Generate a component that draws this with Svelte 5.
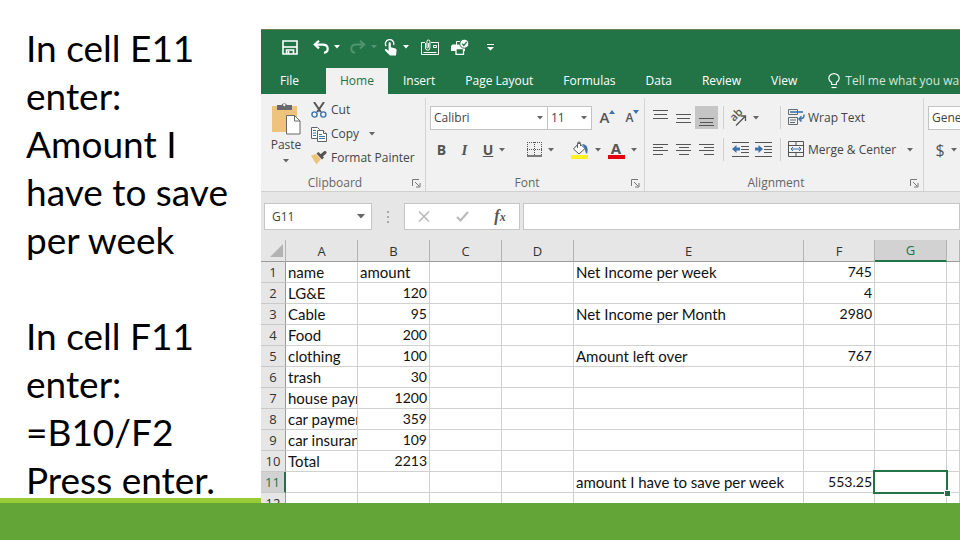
<script lang="ts">
	const notes = [
		['In cell E11', 'enter:', 'Amount I', 'have to save', 'per week'],
		['In cell F11', 'enter:', '=B10/F2', 'Press enter.']
	];

	const tabs = ['Insert', 'Page Layout', 'Formulas', 'Data', 'Review', 'View'];

	const columns = ['A', 'B', 'C', 'D', 'E', 'F', 'G', ''];

	type Row = Record<string, string | number>;

	const rows: Row[] = [
		{ A: 'name', B: 'amount', E: 'Net Income per week', F: 745 },
		{ A: 'LG&E', B: 120, F: 4 },
		{ A: 'Cable', B: 95, E: 'Net Income per Month', F: 2980 },
		{ A: 'Food', B: 200 },
		{ A: 'clothing', B: 100, E: 'Amount left over', F: 767 },
		{ A: 'trash', B: 30 },
		{ A: 'house payment', B: 1200 },
		{ A: 'car payment', B: 359 },
		{ A: 'car insurance', B: 109 },
		{ A: 'Total', B: 2213 },
		{ E: 'amount I have to save per week', F: 553.25 },
		{}
	];

	let formula = $state('');
	let selected = $state({ col: 'G', row: 11 });
</script>

{#snippet caret()}
	<svg class="caret" width="6" height="4" viewBox="0 0 6 4" aria-hidden="true">
		<path d="M0 0h6L3 3.5z" fill="currentColor" />
	</svg>
{/snippet}

{#snippet lines(rowsOfLines: number[][])}
	<svg width="16" height="16" viewBox="0 0 16 16" aria-hidden="true">
		{#each rowsOfLines as [x, y, w]}
			<rect {x} {y} width={w} height="1" fill="#555" />
		{/each}
	</svg>
{/snippet}

{#snippet launcher(label: string)}
	<button class="launcher" aria-label="{label} settings">
		<svg width="9" height="9" viewBox="0 0 9 9" fill="none" stroke="#777">
			<path d="M.5 7V.5H7M3 3l4 4M8 4v4H4" />
		</svg>
	</button>
{/snippet}

<main class="slide">
	<div class="slide__content">
		<section class="notes">
			{#each notes as block}
				<p>
					{#each block as line}
						<span>{line}</span>
					{/each}
				</p>
			{/each}
		</section>

		<section class="excel" aria-label="Spreadsheet">
			<div class="quick">
				<button class="quick__save" aria-label="Save">
					<svg width="16" height="15" viewBox="0 0 16 15" fill="none" stroke="#fff" stroke-width="1.6">
						<path d="M1 1h14v13H1z" />
						<path d="M1 7h14" />
						<path d="M4.5 14v-4h7v4" />
						<path d="M6.5 11v3" />
					</svg>
				</button>
				<button class="quick__split" aria-label="Undo">
					<svg width="16" height="14" viewBox="0 0 16 14" fill="none" stroke="#fff" stroke-width="2.2">
						<path d="M6 .8L1.8 4.6 6 8.4" />
						<path d="M2 4.6h7.5c3.4 0 5.2 1.9 5.2 4.2 0 2.2-1.4 3.7-3.7 4" />
					</svg>
					{@render caret()}
				</button>
				<button class="quick__split quick__split--off" aria-label="Redo" disabled>
					<svg width="16" height="14" viewBox="0 0 16 14" fill="none" stroke="#4f9570" stroke-width="2">
						<path d="M10 .8l4.2 3.8L10 8.4" />
						<path d="M14 4.6H6.5c-3.4 0-5.2 1.9-5.2 4.2 0 2.2 1.4 3.7 3.7 4" />
					</svg>
					{@render caret()}
				</button>
				<button class="quick__split" aria-label="Touch mode">
					<svg width="14" height="17" viewBox="0 0 14 17" aria-hidden="true">
						<path d="M2.2 7.2A4.2 4.2 0 1 1 9.6 6" fill="none" stroke="#fff" stroke-width="1.3" />
						<path
							d="M4.6 4.3c0-1.5 2.2-1.5 2.2 0v4l4.5 1.2c1 .3 1.4 1 1.3 1.9L12 16.5H6L1 11.5c-.6-1 .6-1.9 1.6-1.2l2 1.4z"
							fill="#fff"
						/>
					</svg>
					{@render caret()}
				</button>
				<button class="quick__wide" aria-label="Attach">
					<svg width="18" height="16" viewBox="0 0 18 16" fill="none" stroke="#fff">
						<path d="M4 3.5H.5v12h17v-12H10M2.5 13.5h13M12.5 6.5h3v2h-3z" />
						<path d="M4.5 4v5a2.2 2.2 0 0 0 4.4 0V2.5a1.5 1.5 0 0 0-3 0v6a.8.8 0 0 0 1.5 0V4" />
					</svg>
				</button>
				<button class="quick__wide" aria-label="Print preview">
					<svg width="18" height="16" viewBox="0 0 18 16" aria-hidden="true">
						<path d="M5.5 6V2.5H10" fill="none" stroke="#fff" />
						<path d="M1.5 5.5H14V12H0V7z" fill="#fff" />
						<path d="M5 9.5h7.5v6H5z" fill="#227447" stroke="#fff" stroke-width="1.3" />
						<circle cx="13.3" cy="4.7" r="4.5" fill="#fff" stroke="#227447" />
						<path d="M11.2 4.6l1.6 1.8 2.9-3.5" fill="none" stroke="#227447" stroke-width="1.3" />
					</svg>
				</button>
				<button class="quick__more" aria-label="Customize toolbar">
					<svg width="7" height="7" viewBox="0 0 7 7" fill="#fff">
						<path d="M0 0h7v1H0zM0 3h7L3.5 6.5z" />
					</svg>
				</button>
			</div>

			<nav class="tabs">
				<button class="tabs__file">File</button>
				<button class="tabs__item tabs__item--active">Home</button>
				{#each tabs as tab}
					<button class="tabs__item">{tab}</button>
				{/each}
				<button class="tabs__tell">
					<svg width="12" height="16" viewBox="0 0 12 16" fill="none" stroke="#fff" stroke-width="1.2">
						<path d="M3.6 11.5V9.6C2 8.5.8 7.2.8 5.3a5.2 4.7 0 0 1 10.4 0c0 1.9-1.2 3.2-2.8 4.3v1.9z" />
						<path d="M3.5 14.5h5" />
					</svg>
					Tell me what you want to do
				</button>
			</nav>

			<div class="ribbon">
				<div class="group group--clipboard">
					<div class="clipboard">
						<button class="paste">
							<svg width="30" height="33" viewBox="0 0 30 33" aria-hidden="true">
								<path d="M1 4h25v26H1z" fill="#eec47d" />
								<path d="M6 8V3h4.5a3 3 0 0 1 5.5 0H21v5z" fill="#68696b" />
								<circle cx="13.3" cy="3" r="1.2" fill="#f0f0f0" />
								<path d="M15.5 13.5h8l5.5 5.5v13H15.5z" fill="#fff" stroke="#68696b" />
								<path d="M23.5 13.5V19H29" fill="none" stroke="#68696b" />
							</svg>
							Paste
							{@render caret()}
						</button>
						<div class="clipboard__list">
							<button>
								<svg width="16" height="16" viewBox="0 0 16 16" fill="none">
									<path d="M3 0l6.8 10M13 0L6.2 10" stroke="#555" stroke-width="2" />
									<circle cx="3.5" cy="12.5" r="2.6" stroke="#3e72ab" stroke-width="1.4" />
									<circle cx="12.3" cy="12.5" r="2.6" stroke="#3e72ab" stroke-width="1.4" />
								</svg>
								Cut
							</button>
							<button>
								<svg width="16" height="16" viewBox="0 0 16 16" fill="#fff" stroke="#5f6368">
									<path d="M.5 1.5h6l2 2v9h-8z" />
									<path d="M2 4.5h3M2 7h3M2 9.5h3" stroke="#3e72ab" />
									<path d="M6.5 4.5h6l3 3v8h-9z" />
									<path d="M12.5 4.5v3h3" />
									<path d="M8 8.5h3M8 10.5h6M8 12.5h6" stroke="#3e72ab" />
								</svg>
								Copy
								{@render caret()}
							</button>
							<button>
								<svg width="16" height="14" viewBox="0 0 16 14" aria-hidden="true">
									<path d="M0 4.5l5-1.500 5 5-4.500 5.500L2.500 9z" fill="#eec47d" />
									<path d="M5.500 2.500L7.500 1l5.500 5.500-2 2z" fill="#555" />
									<path d="M10.500 4.500L14 1.500" stroke="#555" stroke-width="3" stroke-linecap="round" />
								</svg>
								Format Painter
							</button>
						</div>
					</div>
					<div class="group__label">Clipboard {@render launcher('Clipboard')}</div>
				</div>

				<div class="group group--font">
					<div class="tools">
						<label class="picker picker--family">
							<select aria-label="Font"><option>Calibri</option></select>
							{@render caret()}
						</label>
						<label class="picker picker--size">
							<select aria-label="Font size"><option>11</option></select>
							{@render caret()}
						</label>
						<button class="tool tool--grow" aria-label="Increase font size">
							A
							<svg width="6" height="4" viewBox="0 0 6 4"><path d="M0 4h6L3 0z" fill="#3e72ab" /></svg>
						</button>
						<button class="tool tool--shrink" aria-label="Decrease font size">
							A
							<svg width="6" height="4" viewBox="0 0 6 4"><path d="M0 0h6L3 4z" fill="#3e72ab" /></svg>
						</button>
					</div>
					<div class="tools">
						<button class="tool tool--bold">B</button>
						<button class="tool tool--italic">I</button>
						<button class="tool tool--split tool--underline"><span>U</span>{@render caret()}</button>
						<i class="rule"></i>
						<button class="tool tool--split" aria-label="Borders">
							<svg width="15" height="15" viewBox="0 0 15 15" fill="none" stroke="#555">
								<path d="M.5 0v13M7.5 0v13M14.5 0v13M0 .5h15M0 7.5h15" stroke-dasharray="1 1" />
								<path d="M0 14h15" stroke-width="1.5" />
							</svg>
							{@render caret()}
						</button>
						<i class="rule"></i>
						<button class="tool tool--split" aria-label="Fill color">
							<svg width="18" height="18" viewBox="0 0 18 18" aria-hidden="true">
								<path d="M0 14h17v4H0z" fill="#fff21f" />
								<path d="M8 2l6 5.5-6 5.5-5.5-5z" fill="#fff" stroke="#555" />
								<path d="M6.5 7V2.5a1.5 1.5 0 0 1 3 0V5" fill="none" stroke="#555" />
								<path d="M11 3c4.5 0 7 4 5 10-1.500-1-2-3-2-5.500z" fill="#3e72ab" />
							</svg>
							{@render caret()}
						</button>
						<button class="tool tool--split tool--color" aria-label="Font color">
							<span>A</span>
							{@render caret()}
						</button>
					</div>
					<div class="group__label">Font {@render launcher('Font')}</div>
				</div>

				<div class="group group--alignment">
					<div class="tools">
						<button class="tool" aria-label="Top align">
							{@render lines([[0, 0, 15], [1, 4, 13], [0, 8, 15]])}
						</button>
						<button class="tool" aria-label="Middle align">
							{@render lines([[0, 4, 15], [1, 8, 13], [0, 12, 15]])}
						</button>
						<button class="tool tool--on" aria-label="Bottom align">
							{@render lines([[0, 8, 15], [1, 12, 13], [0, 15, 15]])}
						</button>
						<i class="rule"></i>
						<button class="tool tool--split tool--orient" aria-label="Orientation">
							<svg width="18" height="18" viewBox="0 0 18 18">
								<text x="5" y="13" transform="rotate(-45 5 13)">ab</text>
								<path d="M7 16.5L16 7.5M11.5 7H16.5V12" fill="none" stroke="#555" stroke-width="1.3" />
							</svg>
							{@render caret()}
						</button>
						<i class="rule"></i>
						<button class="tool tool--text">
							<svg width="17" height="17" viewBox="0 0 17 17" fill="none" stroke="#626b73">
								<path d="M.5.5h9v5h-9zM.5 8.5h9v7h-9zM2 11h6M2 13.5h5" />
								<path d="M2 3h13" stroke="#3e72ab" stroke-width="1.6" />
								<path d="M16 5.5c.3 3-1 4.5-5 4.5M13.5 7.3L11 10l2.5 2.5" stroke="#3e72ab" stroke-width="1.5" />
							</svg>
							Wrap Text
						</button>
					</div>
					<div class="tools">
						<button class="tool" aria-label="Align left">
							{@render lines([[0, 2, 15], [0, 5, 10], [0, 8, 15], [0, 12, 10]])}
						</button>
						<button class="tool" aria-label="Center">
							{@render lines([[0, 2, 15], [3, 5, 10], [0, 8, 15], [3, 12, 10]])}
						</button>
						<button class="tool" aria-label="Align right">
							{@render lines([[0, 2, 15], [5, 5, 10], [0, 8, 15], [5, 12, 10]])}
						</button>
						<i class="rule"></i>
						<button class="tool" aria-label="Decrease indent">
							<svg width="17" height="15" viewBox="0 0 17 15" aria-hidden="true">
								<path d="M0 .5h17M9 4.5h8M9 7.5h8M9 10.5h8M0 14.5h17" stroke="#555" />
								<path d="M0 7l4.5-4v2.5H8v3H4.5V11z" fill="#3e72ab" />
							</svg>
						</button>
						<button class="tool" aria-label="Increase indent">
							<svg width="17" height="15" viewBox="0 0 17 15" aria-hidden="true">
								<path d="M0 .5h17M9 4.5h8M9 7.5h8M9 10.5h8M0 14.5h17" stroke="#555" />
								<path d="M8 7L3.5 3v2.5H0v3h3.5V11z" fill="#3e72ab" />
							</svg>
						</button>
						<i class="rule"></i>
						<button class="tool tool--text">
							<svg width="17" height="17" viewBox="0 0 17 17" fill="none" stroke="#555">
								<path d="M.5.5h15v15H.5zM.5 4.5h15M.5 11.5h15M8 .5v4M8 11.5v4" />
								<path d="M3 8h10M5 6L3 8l2 2M11 6l2 2-2 2" stroke="#3e72ab" />
							</svg>
							Merge &amp; Center
							{@render caret()}
						</button>
					</div>
					<div class="group__label">Alignment {@render launcher('Alignment')}</div>
				</div>

				<div class="group group--number">
					<div class="tools">
						<label class="picker picker--format">
							<select aria-label="Number format"><option>General</option></select>
						</label>
					</div>
					<div class="tools">
						<button class="tool tool--split tool--money"><span>$</span>{@render caret()}</button>
					</div>
				</div>
			</div>

			<div class="formula">
				<label class="formula__name">
					<input aria-label="Name box" value="{selected.col}{selected.row}" />
					<svg width="8" height="5" viewBox="0 0 8 5"><path d="M0 0h8L4 4.5z" fill="#666" /></svg>
				</label>
				<svg class="formula__dots" width="2" height="12" viewBox="0 0 2 12" fill="#aaa" aria-hidden="true">
					<path d="M0 0h2v2H0zM0 5h2v2H0zM0 10h2v2H0z" />
				</svg>
				<div class="formula__actions">
					<button aria-label="Cancel">
						<svg width="12" height="11" viewBox="0 0 12 11" stroke="#bbb" stroke-width="1.6">
							<path d="M1 .5l10 10M11 .5l-10 10" />
						</svg>
					</button>
					<button aria-label="Enter">
						<svg width="13" height="11" viewBox="0 0 13 11" fill="none" stroke="#bbb" stroke-width="2.2">
							<path d="M1 6l3.5 3.5L12 1" />
						</svg>
					</button>
					<button class="formula__fx" aria-label="Insert function">f<small>x</small></button>
				</div>
				<input class="formula__input" aria-label="Formula bar" bind:value={formula} />
			</div>

			<table class="sheet">
				<colgroup>
					<col class="sheet__rows" />
					<col class="sheet__col" />
					<col class="sheet__col" />
					<col class="sheet__col" />
					<col class="sheet__col" />
					<col class="sheet__wide" />
					<col class="sheet__narrow" />
					<col class="sheet__col" />
					<col />
				</colgroup>
				<thead>
					<tr>
						<th class="sheet__corner" aria-label="Select all">
							<svg width="13" height="13" viewBox="0 0 13 13"><path d="M13 0v13H0z" fill="#b3b3b3" /></svg>
						</th>
						{#each columns as col}
							<th scope="col" class:selected={col === selected.col}>{col}</th>
						{/each}
					</tr>
				</thead>
				<tbody>
					{#each rows as row, i}
						<tr>
							<th scope="row" class:selected={i + 1 === selected.row}><div>{i + 1}</div></th>
							{#each columns as col}
								<td
									class:number={typeof row[col] === 'number'}
									class:active={col === selected.col && i + 1 === selected.row}
								>
									<div>{row[col] ?? ''}</div>
								</td>
							{/each}
						</tr>
					{/each}
				</tbody>
			</table>
		</section>
	</div>
	<div class="slide__band"></div>
</main>

<style>
	:global(body) {
		background: #fff;
	}

	button,
	input,
	select {
		margin: 0;
		padding: 0;
		border: 0;
		border-radius: 0;
		background: none;
		color: inherit;
		font: inherit;
	}

	button {
		display: flex;
		flex: none;
		align-items: center;
		white-space: nowrap;
	}

	svg {
		display: block;
		flex: none;
	}

	.slide {
		display: flex;
		flex-direction: column;
		min-height: 100vh;
		overflow: hidden;
	}

	.slide__content {
		display: grid;
		grid-template-columns: 261px minmax(0, 1fr);
	}

	.slide__band {
		flex: 1;
		min-height: 37px;
		background: #63a537;
	}

	.notes {
		display: flex;
		flex-direction: column;
		gap: 48px;
		box-sizing: border-box;
		padding: 24px 0 0 26px;
		border-bottom: 5px solid #99cb38;
		color: #000;
		font: 37px/48px Lato, Carlito, sans-serif;
		white-space: nowrap;
	}

	.notes p {
		margin: 0;
	}

	.notes span {
		display: block;
	}

	/* the last line sits on the stripe, so the block must not push it down */
	.notes p:last-child {
		margin-bottom: -8px;
	}

	.excel {
		min-width: 0;
		margin-top: 29px;
		overflow: hidden;
		background: #e6e6e6;
		color: #444;
		font: 12px/16px 'Open Sans', 'Segoe UI', sans-serif;
	}

	/* title bar */
	.quick {
		display: flex;
		align-items: center;
		box-sizing: border-box;
		height: 39px;
		padding: 0 0 4px 21px;
		border-top: 1px solid #6f8157;
		background: #227447;
		color: #fff;
	}

	.quick__save {
		width: 31px;
	}

	.quick__split {
		gap: 5px;
		width: 37px;
	}

	.quick__split--off {
		width: 34px;
		color: #4f9570;
	}

	.quick__wide {
		width: 30px;
	}

	.quick__more {
		margin-left: 6px;
	}

	.tabs {
		display: flex;
		height: 26px;
		overflow: hidden;
		background: #227447;
		color: #fff;
	}

	.tabs__file {
		justify-content: center;
		box-sizing: border-box;
		width: 65px;
		padding-right: 8px;
	}

	.tabs__item {
		padding: 0 15px;
	}

	.tabs__item--active {
		padding: 0 14px;
		background: #f1f1f1;
		color: #227447;
	}

	.tabs__tell {
		gap: 5px;
		padding-left: 16px;
		color: #d5e6db;
	}

	/* ribbon */
	.ribbon {
		display: flex;
		height: 97px;
		border-bottom: 1px solid #d0d0d0;
		overflow: hidden;
		background: #f1f1f1;
	}

	.group {
		display: flex;
		flex: none;
		flex-direction: column;
		gap: 9px;
		box-sizing: border-box;
		margin: 4px 0 0;
		padding: 8px 4px 0;
		border-right: 1px solid #d4d4d4;
	}

	.group--clipboard {
		width: 165px;
		padding-top: 4px;
	}

	.group--font {
		width: 219px;
	}

	.group--alignment {
		width: 279px;
	}

	.group--number {
		flex: 1;
		border-right: 0;
	}

	.group__label {
		position: relative;
		margin-top: auto;
		padding-right: 16px;
		color: #666;
		text-align: center;
	}

	.launcher {
		position: absolute;
		right: 0;
		top: 4px;
	}

	.caret {
		color: #666;
	}

	.quick .caret {
		color: inherit;
	}

	.clipboard {
		display: flex;
		gap: 4px;
	}

	.paste {
		flex-direction: column;
		gap: 2px;
		width: 42px;
	}

	.paste .caret {
		margin-top: 4px;
	}

	.clipboard__list {
		display: flex;
		flex-direction: column;
		gap: 8px;
	}

	.clipboard__list button {
		gap: 4px;
		height: 16px;
	}

	.clipboard__list .caret {
		margin-left: 6px;
	}

	.tools {
		display: flex;
		align-items: center;
		height: 23px;
	}

	.tool {
		justify-content: center;
		min-width: 23px;
		height: 23px;
		color: #555;
	}

	.tool--on {
		background: #c5c5c5;
	}

	.tool--split {
		gap: 6px;
		min-width: 36px;
	}

	.tool--bold,
	.tool--underline,
	.tool--color {
		font-weight: 700;
	}

	.tool--bold {
		font-size: 14px;
	}

	.tool--italic {
		font: italic 700 15px/16px 'Liberation Serif', serif;
	}

	.tool--underline span {
		font-size: 14px;
		text-decoration: underline;
	}

	.tool--grow,
	.tool--shrink {
		align-items: flex-start;
		margin-left: 4px;
		font-weight: 600;
		line-height: 23px;
	}

	.tool--grow {
		font-size: 15px;
	}

	.tool--shrink {
		margin-left: 2px;
	}

	.tool--grow svg,
	.tool--shrink svg {
		margin-top: 4px;
	}

	.tool--color span {
		width: 17px;
		border-bottom: 4px solid #e3000f;
		font-size: 15px;
		line-height: 14px;
		text-align: center;
	}

	.tool--money span {
		font-size: 16px;
	}

	.tool--text {
		gap: 3px;
		padding-left: 2px;
		color: #444;
	}

	.tool--text .caret {
		margin-left: 8px;
	}

	.tool--orient {
		min-width: 46px;
		justify-content: flex-start;
	}

	.tool--orient svg {
		overflow: visible;
	}

	.tool--orient text {
		fill: #555;
		font-size: 11px;
		font-weight: 600;
	}

	.rule {
		width: 1px;
		height: 23px;
		margin: 0 5px;
		background: #d0d0d0;
	}

	.picker {
		display: grid;
		flex: none;
		grid-template-columns: 1fr 14px;
		align-items: center;
		box-sizing: border-box;
		height: 24px;
		border: 1px solid #c3c3c3;
		background: #fff;
	}

	.picker select {
		grid-area: 1 / 1 / 2 / 3;
		width: 100%;
		height: 22px;
		padding-left: 3px;
		appearance: none;
	}

	.picker .caret {
		grid-area: 1 / 2;
		justify-self: center;
		pointer-events: none;
	}

	.picker--family {
		width: 118px;
	}

	.picker--size {
		width: 45px;
		margin-left: -1px;
	}

	.picker--format {
		width: 100px;
	}

	/* formula bar */
	.formula {
		display: flex;
		padding: 11px 0 10px 3px;
	}

	.formula__name,
	.formula__actions,
	.formula__input {
		box-sizing: border-box;
		height: 27px;
		border: 1px solid #c6c6c6;
		background: #fff;
	}

	.formula__name {
		display: flex;
		align-items: center;
		width: 108px;
		padding: 0 6px 0 7px;
	}

	.formula__name input {
		flex: 1;
		min-width: 0;
	}

	.formula__dots {
		margin: 8px 15px 0;
	}

	.formula__actions {
		display: flex;
		width: 116px;
		margin-right: 3px;
	}

	.formula__actions button {
		flex: 1;
		justify-content: center;
	}

	.formula__actions .formula__fx {
		align-items: baseline;
		color: #555;
		font: italic 700 16px/24px 'Liberation Serif', serif;
	}

	.formula__fx small {
		font-size: 12px;
	}

	.formula__input {
		flex: 1;
		min-width: 0;
		padding: 0 6px;
	}

	/* grid */
	.sheet {
		width: 100%;
		border-collapse: separate;
		border-spacing: 0;
		table-layout: fixed;
		background: #fff;
		color: #111;
		font: 15px/20px Lato, Carlito, sans-serif;
	}

	.sheet__rows {
		width: 25px;
	}

	.sheet__col {
		width: 72px;
	}

	.sheet__wide {
		width: 230px;
	}

	.sheet__narrow {
		width: 71px;
	}

	.sheet th {
		height: 20px;
		padding: 0;
		border-right: 1px solid #b4b4b4;
		border-bottom: 1px solid #9b9b9b;
		background: #e6e6e6;
		color: #333;
		font: 13px/20px 'Open Sans', 'Segoe UI', sans-serif;
	}

	.sheet thead th.selected {
		border-bottom: 2px solid #227447;
		background: #d2d2d2;
		color: #227447;
		line-height: 19px;
	}

	.sheet tbody th {
		border-right-color: #9b9b9b;
		border-bottom-color: #c9c9c9;
	}

	.sheet tbody th.selected {
		border-right: 2px solid #227447;
		background: #d2d2d2;
		color: #227447;
	}

	.sheet__corner svg {
		margin-left: 9px;
	}

	.sheet td {
		position: relative;
		padding: 0;
		border-right: 1px solid #d0d0d0;
		border-bottom: 1px solid #d0d0d0;
	}

	.sheet td div {
		height: 20px;
		padding: 0 2px;
		overflow: hidden;
		white-space: nowrap;
	}

	.sheet td.number {
		font-size: 14px;
		text-align: right;
	}

	.sheet td.active {
		z-index: 1;
	}

	.sheet td.active::before {
		position: absolute;
		inset: -2px;
		border: 2px solid #227447;
		content: '';
	}

	.sheet td.active::after {
		position: absolute;
		right: -5px;
		bottom: -5px;
		width: 5px;
		height: 5px;
		border: 1px solid #fff;
		background: #227447;
		content: '';
	}

	/* the window is cut off partway through the last row */
	.sheet tr:last-child div {
		height: 10px;
		overflow: hidden;
	}

	.sheet tbody tr:last-child th,
	.sheet tbody tr:last-child td {
		height: 10px;
		border-bottom: 0;
	}
</style>
